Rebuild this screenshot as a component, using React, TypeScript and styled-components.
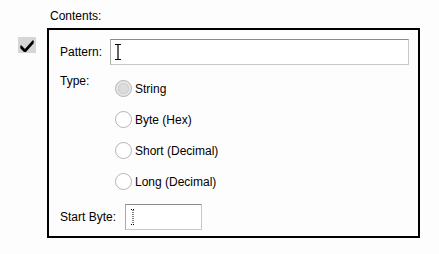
import React from "react";
import styled, { createGlobalStyle } from "styled-components";

const GlobalStyle = createGlobalStyle`
  html, body {
    margin: 0;
    padding: 0;
    background: #fdfdfd;
  }
  body {
    font-family: "Liberation Sans", Arial, sans-serif;
    font-size: 12px;
    color: #000;
  }
`;

const Page = styled.div`
  display: flex;
  align-items: flex-start;
  padding: 9px 0 0 18px;
  width: 439px;
  height: 254px;
  box-sizing: border-box;
`;

const CheckBox = styled.div`
  width: 18px;
  height: 16px;
  margin-top: 28px;
  background: #d6d6d6;
  display: flex;
  align-items: center;
  justify-content: center;
`;

const Group = styled.div`
  margin-left: 11px;
  display: flex;
  flex-direction: column;
`;

const Legend = styled.div`
  padding-left: 3px;
  line-height: 14px;
  height: 19px;
`;

const Box = styled.div`
  width: 373px;
  height: 210px;
  box-sizing: border-box;
  border: 2px solid #000;
  padding: 9px 9px 0 11px;
  display: flex;
  flex-direction: column;
`;

const Row = styled.div`
  display: flex;
  align-items: center;
`;

const TypeRow = styled.div`
  display: flex;
  align-items: flex-start;
  margin-top: 10px;
`;

const Label = styled.div<{ $w: number }>`
  width: ${(p) => p.$w}px;
  flex: none;
`;

const TypeLabel = styled(Label)`
  margin-top: -1px;
`;

const Input = styled.div<{ $w?: number }>`
  position: relative;
  height: 26px;
  box-sizing: border-box;
  ${(p) => (p.$w ? `width: ${p.$w}px;` : "flex: 1;")}
  background: #fff;
  border: 1px solid #c8c8c8;
  border-top-color: #8a8a8a;
  border-left-color: #a8a8a8;
`;

const Caret = styled.svg`
  position: absolute;
  left: 4px;
  top: 4px;
`;

const Options = styled.div`
  display: flex;
  flex-direction: column;
  gap: 12px;
  padding-top: 4px;
`;

const Option = styled.div`
  display: flex;
  align-items: center;
  height: 19px;
`;

const Radio = styled.div<{ $on?: boolean }>`
  width: 17px;
  height: 17px;
  box-sizing: border-box;
  border-radius: 50%;
  border: 1px solid #b4b4b4;
  background: ${(p) => (p.$on ? "#e6e6e6" : "#fff")};
  display: flex;
  align-items: center;
  justify-content: center;
  margin-right: 3px;

  &::after {
    content: "";
    display: ${(p) => (p.$on ? "block" : "none")};
    width: 11px;
    height: 11px;
    border-radius: 50%;
    background: #dcdcdc;
    box-shadow: inset 0 0 0 1px #cfcfcf;
  }
`;

const BottomRow = styled(Row)`
  margin-top: 13px;
`;

const options = ["String", "Byte (Hex)", "Short (Decimal)", "Long (Decimal)"];

export default function App() {
  return (
    <>
      <GlobalStyle />
      <Page>
        <CheckBox>
          <svg width="14" height="13" viewBox="0 0 14 13">
            <path d="M1 7 L5 11 L13 2 L13 4 L5 13 L1 9 Z" fill="#000" stroke="#000" strokeWidth="1.4" strokeLinejoin="round" />
          </svg>
        </CheckBox>
        <Group>
          <Legend>Contents:</Legend>
          <Box>
            <Row>
              <Label $w={50}>Pattern:</Label>
              <Input>
                <Caret width="6" height="16" viewBox="0 0 6 16">
                  <path d="M0 0.5 H6 M3 0.5 V15.5 M0 15.5 H6" stroke="#000" strokeWidth="1.2" fill="none" />
                </Caret>
              </Input>
            </Row>
            <TypeRow>
              <TypeLabel $w={55}>Type:</TypeLabel>
              <Options>
                {options.map((o, i) => (
                  <Option key={o}>
                    <Radio $on={i === 0} />
                    {o}
                  </Option>
                ))}
              </Options>
            </TypeRow>
            <BottomRow>
              <Label $w={65}>Start Byte:</Label>
              <Input $w={77}>
                <Caret width="6" height="16" viewBox="0 0 6 16">
                  <path d="M1 0.5 H5 M3 1 V15 M1 15.5 H5" stroke="#000" strokeWidth="1" strokeDasharray="1 1" fill="none" />
                </Caret>
              </Input>
            </BottomRow>
          </Box>
        </Group>
      </Page>
    </>
  );
}
